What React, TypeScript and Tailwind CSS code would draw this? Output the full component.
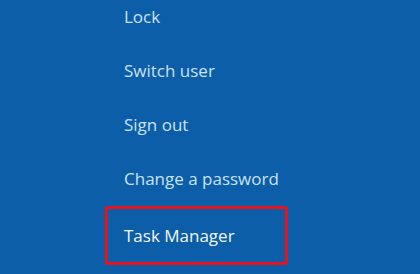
const items = ["Lock", "Switch user", "Sign out", "Change a password"];

export default function App() {
  return (
    <div
      className="h-[274px] w-[420px] overflow-hidden bg-[#0d5ea8] pl-[105px]"
      style={{ fontFamily: '"Open Sans", "Noto Sans", sans-serif' }}
    >
      <ul className="-mt-[10px] flex flex-col">
        {items.map((item) => (
          <li key={item} className="flex h-[54px] items-center pl-[19px] text-[17px] text-[#c9e2f5]">
            {item}
          </li>
        ))}
        <li className="flex h-[59px] w-[183px] items-center rounded-[3px] border-[3px] border-[#e8121c] pl-[16px] text-[17px] text-[#f2f7fc]">
          Task Manager
        </li>
      </ul>
    </div>
  );
}
